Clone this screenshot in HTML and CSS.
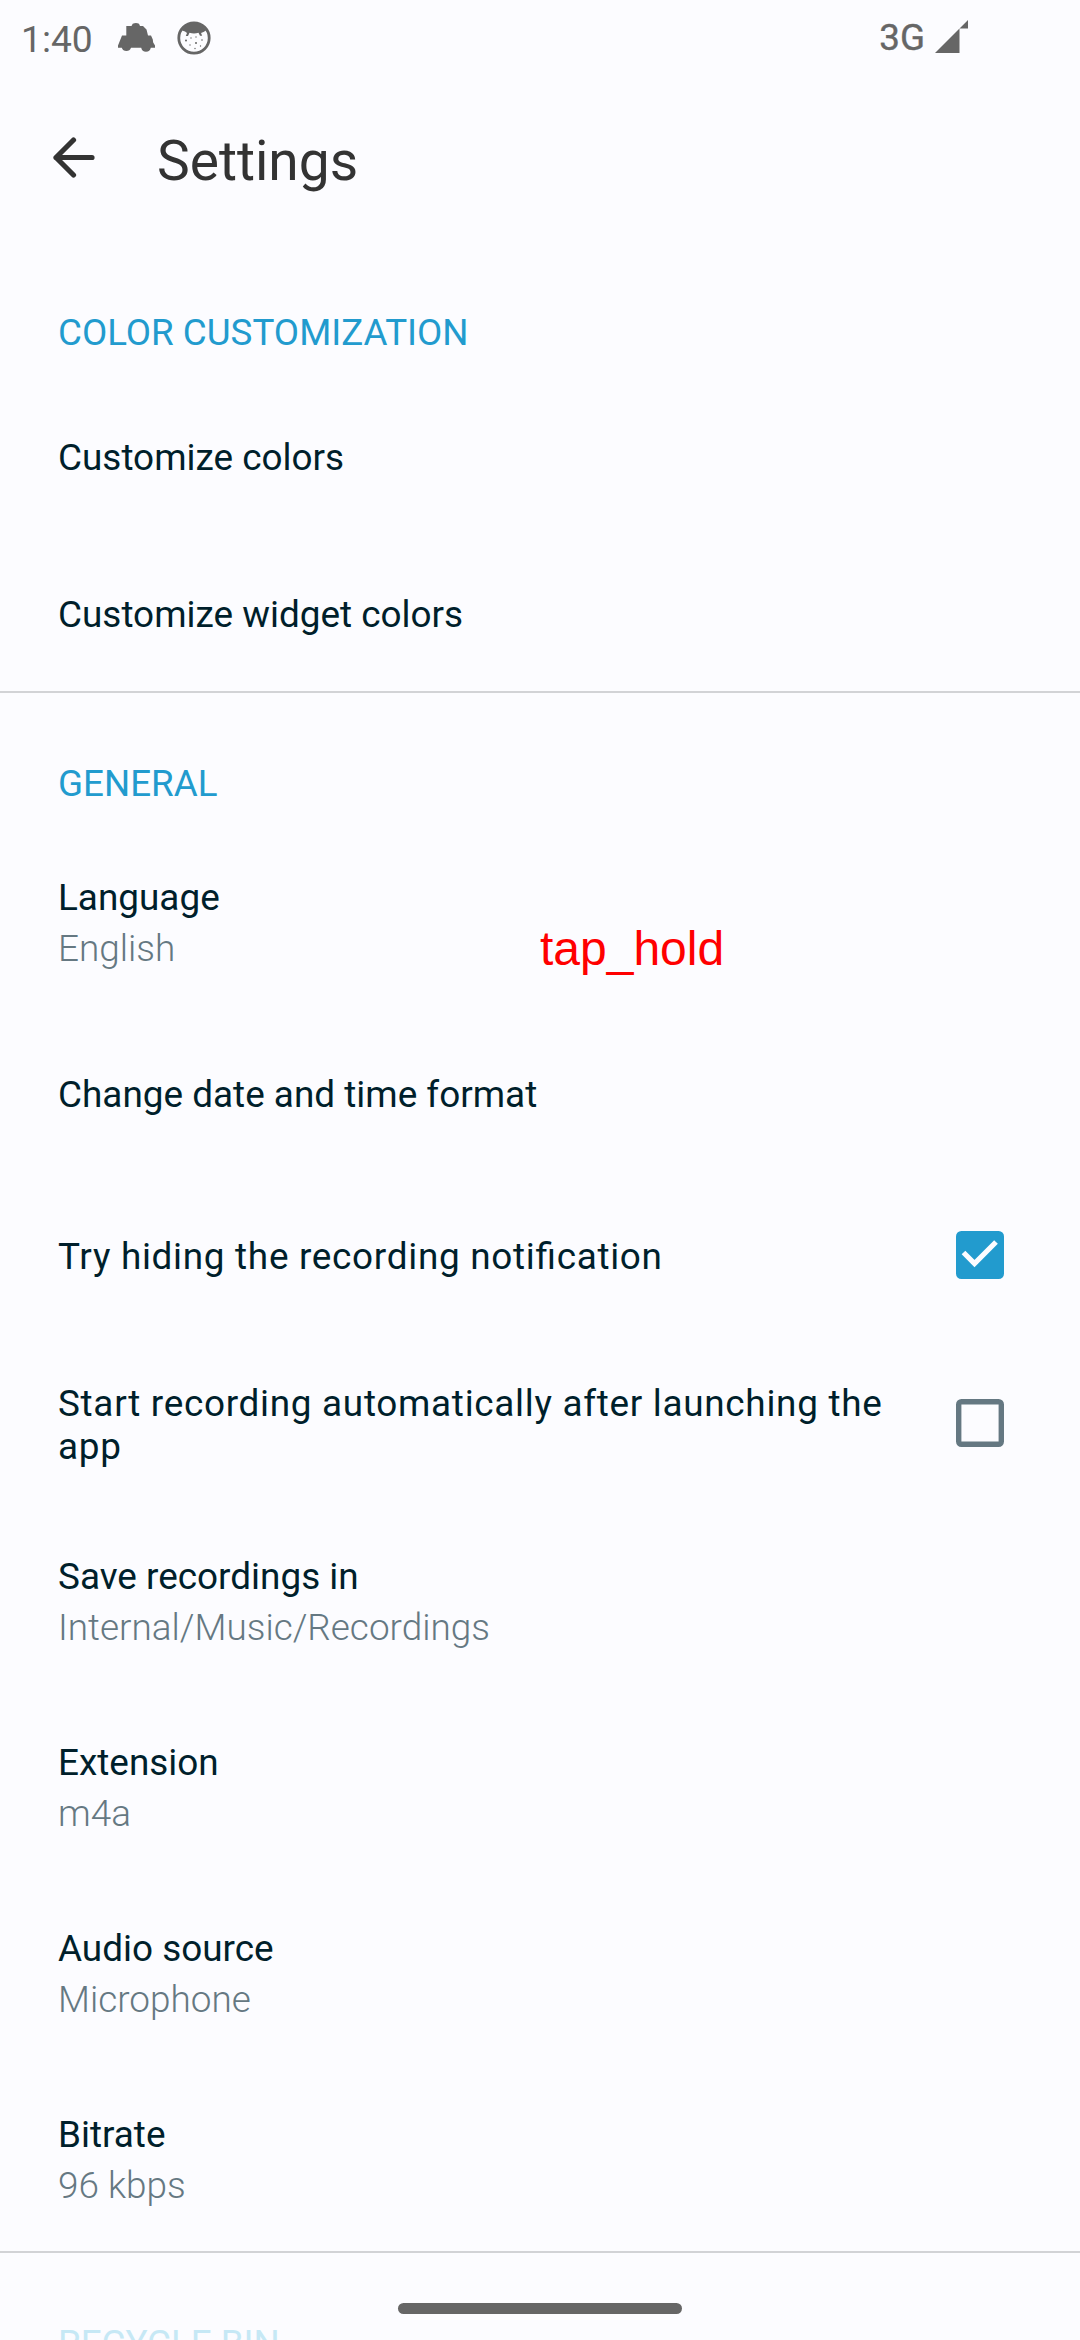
FILE: index.html
```html
<!DOCTYPE html>
<html lang="en">
<head>
<meta charset="utf-8">
<title>Settings</title>
<link rel="stylesheet" href="styles.css">
</head>
<body>
<div class="screen">
  <header class="status-bar">
    <span class="clock">1:40</span>
    <svg class="car-icon" viewBox="0 0 37 30"><path d="M8.300 2.900H13.500L14.700.8Q18 -.6 21 .8L22 2.900H25L28.500 6.500 30 12.500H33L34.800 16.500 35.200 19.500 37 22.500V24.800H32.800A4.900 4.900 0 0 1 23.200 24.800H13A4.900 4.900 0 0 1 3.800 24.800H0V22.500L2 17.500 4 12.500H8.300Z"/></svg>
    <svg class="face-icon" viewBox="0 0 34 34"><circle class="ring" cx="17" cy="17" r="15.200"/><path d="M5 9.500C9 0 25 0 29 9.500L26.500 11 24 12 25.200 14.800H23L21.500 11.800Q17 13 12.500 11.800L11 15H8.800L10 12 8 10.500Z"/><g class="dots"><circle cx="9" cy="19.500" r="1"/><circle cx="14" cy="17" r=".7"/><circle cx="19" cy="16" r=".7"/><circle cx="25" cy="19" r=".8"/><circle cx="19" cy="22" r="1"/><circle cx="13" cy="24" r=".7"/><circle cx="23.500" cy="25" r=".7"/><circle cx="18" cy="27.500" r=".7"/></g></svg>
    <span class="network">3G</span>
    <svg class="signal-icon" viewBox="0 0 33 33"><path d="M0 33L24.500 8.500V33zM24.500 8.500L33 0v8.500z"/></svg>
  </header>
  <div class="toolbar">
    <svg class="back-icon" viewBox="0 0 42 42"><path d="M39 20.500H3M20.500 3L3 20.500 20.500 38"/></svg>
    <h1 class="page-title">Settings</h1>
  </div>
  <main class="settings">
    <section class="section">
      <h2 class="section-title">COLOR CUSTOMIZATION</h2>
      <div class="row"><div class="label">Customize colors</div></div>
      <div class="row"><div class="label">Customize widget colors</div></div>
    </section>
    <section class="section">
      <h2 class="section-title">GENERAL</h2>
      <div class="row double"><div class="label">Language</div><div class="value">English</div><span class="gesture">tap_hold</span></div>
      <div class="row"><div class="label">Change date and time format</div></div>
      <div class="row check"><div class="label">Try hiding the recording notification</div>
        <svg class="box on" viewBox="0 0 48 48"><rect width="48" height="48" rx="5.300"/><path d="M7.500 21.500L18.500 32.500 40 11"/></svg></div>
      <div class="row check"><div class="label">Start recording automatically after launching the app</div>
        <svg class="box" viewBox="0 0 48 48"><rect x="2.700" y="2.700" width="42.600" height="42.600" rx="2.700"/></svg></div>
      <div class="row double"><div class="label">Save recordings in</div><div class="value">Internal/Music/Recordings</div></div>
      <div class="row double"><div class="label">Extension</div><div class="value">m4a</div></div>
      <div class="row double"><div class="label">Audio source</div><div class="value">Microphone</div></div>
      <div class="row double"><div class="label">Bitrate</div><div class="value">96 kbps</div></div>
    </section>
    <section class="section">
      <h2 class="section-title faded">RECYCLE BIN</h2>
    </section>
  </main>
  <div class="home-handle"></div>
</div>
</body>
</html>
```
FILE: styles.css
```css
* { box-sizing: border-box; margin: 0; padding: 0; }
body { background: #fcfcff; }
.screen {
  position: relative;
  width: 1080px;
  height: 2340px;
  overflow: hidden;
  display: flex;
  flex-direction: column;
  font: 400 36.75px/43px Roboto, sans-serif;
  color: #001f2b;
}
.status-bar {
  flex: none;
  height: 76px;
  padding: 0 112px 0 21px;
  display: flex;
  align-items: center;
  color: #666;
  fill: #666;
}
.clock { width: 96.5px; padding-top: 2px; font-size: 37.2px; }
.car-icon { width: 37px; height: 30px; }
.face-icon { width: 34px; height: 34px; margin-left: 22.5px; }
.ring { fill: none; stroke: #666; stroke-width: 2.8; }
.network { margin-left: auto; padding-bottom: 2px; font-weight: 450; -webkit-text-stroke: 0.4px #666; }
.signal-icon { width: 33px; height: 33px; margin-left: 10px; margin-bottom: 3px; }
.toolbar {
  flex: none;
  height: 166px;
  padding: 50px 0 0 53px;
  display: flex;
  align-items: flex-start;
  color: #333;
}
.back-icon { width: 42px; height: 42px; margin-top: 11px; fill: none; stroke: #333; stroke-width: 5.2; stroke-linecap: round; stroke-linejoin: round; }
.page-title { margin: 3px 0 0 62px; font-size: 55.1px; line-height: 65px; font-weight: 400; }
.section { border-bottom: 2px solid #d2d3d6; }
.section:last-child { border: 0; }
.section-title {
  height: 137px;
  padding: 69px 58px 0;
  font-size: 36.75px;
  line-height: 43px;
  font-weight: 400;
  color: #229bce;
}
.faded { color: #c6e8f5; }
.row {
  position: relative;
  height: 157px;
  padding: 0 58px;
  display: flex;
  flex-direction: column;
  justify-content: center;
  font-size: 36.9px;
}
.row:last-child { margin-bottom: -2px; }
.double { height: 186px; gap: 8px; }
.value { font-weight: 300; color: #657882; }
.check {
  height: 168px;
  padding-right: 76px;
  flex-direction: row;
  align-items: center;
  justify-content: space-between;
}
.check .label { width: 850px; padding-bottom: 0.6px; letter-spacing: 0.7px; font-feature-settings: "liga" 1; }
.box { flex: none; width: 48px; height: 48px; margin-bottom: 4px; fill: none; stroke: #657882; stroke-width: 5.4; }
.on { fill: #229bce; stroke: none; }
.on path { fill: none; stroke: #fcfcff; stroke-width: 5.2; }
.gesture {
  position: absolute;
  left: 540px;
  top: 91px;
  font: 48px/55px "Liberation Sans", sans-serif;
  color: #f00;
}
.home-handle {
  position: absolute;
  left: 398px;
  top: 2303px;
  width: 284px;
  height: 11px;
  border-radius: 6px;
  background: #666;
}
```
